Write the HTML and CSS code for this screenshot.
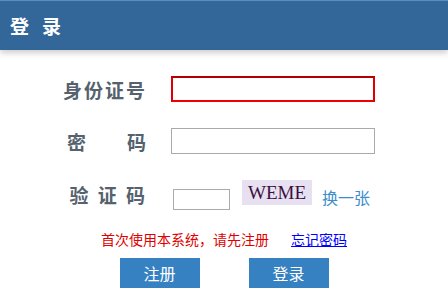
FILE: index.html
```html
<!DOCTYPE html>
<html lang="zh-CN">
  <head>
    <meta charset="UTF-8" />
    <meta name="viewport" content="width=device-width, initial-scale=1.0" />
    <title>登录</title>
    <link rel="stylesheet" href="styles.css">
  </head>
  <body>
    <div class="header">
      <span class="header-title">登录</span>
    </div>
    <div class="login-form">
      <div class="form-row">
        <label class="form-label">身份证号</label>
        <input class="form-input active" type="text" />
      </div>
      <div class="form-row">
        <label class="form-label spaced">密&#12288;&#12288;码</label>
        <input class="form-input" type="password" />
      </div>
      <div class="form-row code-row">
        <label class="form-label">验 证 码</label>
        <input class="code-input" type="text" />
        <div class="code-image">WEME</div>
        <a class="code-refresh" href="#">换一张</a>
      </div>
      <div class="form-note">
        <span class="note-text">首次使用本系统，请先注册</span>
        <a class="forgot-link" href="#">忘记密码</a>
      </div>
      <div class="form-actions">
        <button class="form-button">注册</button>
        <button class="form-button">登录</button>
      </div>
    </div>
  </body>
</html>
```

FILE: styles.css
```css
body {
  margin: 0;
  font-family: "Liberation Sans", "Noto Sans CJK SC", sans-serif;
  background-color: #fff;
}
.header {
  height: 49px;
  border-top: 1px solid #5d8dbf;
  background-color: #336699;
  box-shadow: 0 3px 6px rgba(0, 0, 0, 0.2);
  padding-left: 10px;
}
.header-title {
  display: block;
  padding-top: 2px;
  line-height: 49px;
  font-size: 19px;
  font-weight: bold;
  letter-spacing: 13px;
  color: white;
}
.login-form {
  padding-top: 26px;
}
.form-row {
  display: flex;
  align-items: center;
  height: 26px;
  margin-bottom: 26px;
}
.form-label {
  width: 147px;
  text-align: right;
  font-size: 19px;
  font-weight: bold;
  letter-spacing: 2px;
  color: #55626e;
  white-space: pre;
}
.form-label.spaced {
  letter-spacing: 1px;
}
.form-input {
  box-sizing: border-box;
  width: 204px;
  height: 26px;
  margin-left: 24px;
  border: 1px solid #aaa;
  outline: none;
  padding: 0 4px;
}
.form-input.active {
  border: 2px solid #dd0000;
  border-top-color: #b00000;
  border-bottom-color: #f00000;
}
.code-row {
  height: 30px;
  align-items: flex-start;
  margin-bottom: 0;
}
.code-row .form-label {
  line-height: 26px;
  margin-top: 4px;
}
.code-input {
  box-sizing: border-box;
  width: 57px;
  height: 21px;
  margin-top: 9px;
  margin-left: 26px;
  border: 1px solid #aaa;
  outline: none;
}
.code-image {
  width: 70px;
  height: 25px;
  margin-left: 12px;
  background-color: #e6e0f0;
  font-family: "Liberation Serif", serif;
  font-size: 19px;
  line-height: 25px;
  text-align: center;
  color: #3a0f3f;
}
.code-refresh {
  margin-left: 10px;
  margin-top: 6px;
  line-height: 26px;
  font-size: 16px;
  color: #3c8dcb;
  text-decoration: none;
}
.form-note {
  display: flex;
  justify-content: center;
  gap: 22px;
  margin-top: 20px;
  line-height: 20px;
  font-size: 14px;
}
.note-text {
  color: #e00000;
}
.forgot-link {
  color: #0000ff;
}
.form-actions {
  display: flex;
  justify-content: center;
  gap: 49px;
  margin-top: 8px;
}
.form-button {
  width: 80px;
  height: 30px;
  border: none;
  background-color: #3581c2;
  color: white;
  font-family: "Liberation Sans", "Noto Sans CJK SC", sans-serif;
  font-size: 16px;
  cursor: pointer;
}
```
